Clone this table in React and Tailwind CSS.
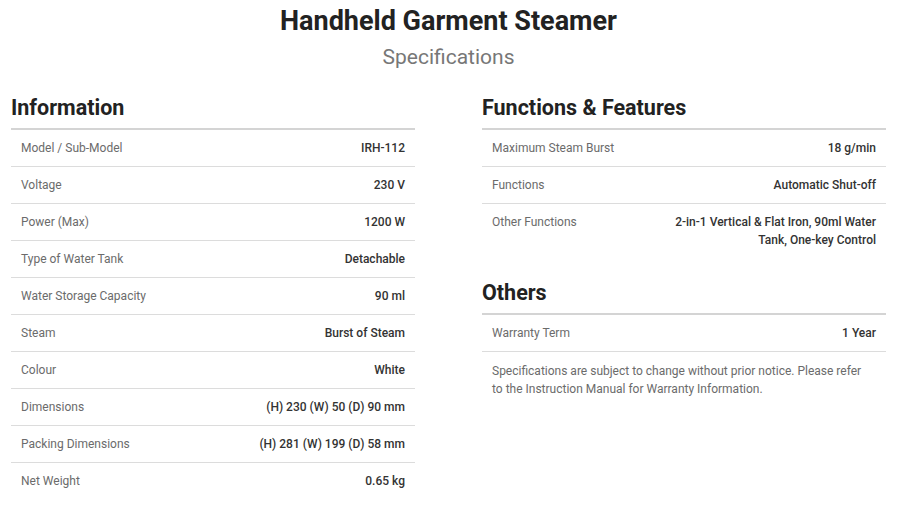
const INFORMATION = [
  ['Model / Sub-Model', 'IRH-112'],
  ['Voltage', '230 V'],
  ['Power (Max)', '1200 W'],
  ['Type of Water Tank', 'Detachable'],
  ['Water Storage Capacity', '90 ml'],
  ['Steam', 'Burst of Steam'],
  ['Colour', 'White'],
  ['Dimensions', '(H) 230 (W) 50 (D) 90 mm'],
  ['Packing Dimensions', '(H) 281 (W) 199 (D) 58 mm'],
  ['Net Weight', '0.65 kg'],
];

const FEATURES = [
  ['Maximum Steam Burst', '18 g/min'],
  ['Functions', 'Automatic Shut-off'],
  ['Other Functions', '2-in-1 Vertical & Flat Iron, 90ml Water Tank, One-key Control'],
];

const OTHERS = [['Warranty Term', '1 Year']];

function SpecTable({ title, rows, lastBorder = false }) {
  return (
    <div>
      <h2 className="text-[21.5px] font-bold leading-[28px] text-[#222] mb-[6px]">{title}</h2>
      <div className="border-t-2 border-[#d4d4d4]">
        {rows.map(([label, value], i) => (
          <div
            key={label}
            className={
              'flex items-start justify-between gap-4 px-[10px] py-[9px] text-[12px] leading-[18px] ' +
              (i < rows.length - 1 || lastBorder ? 'border-b border-[#dcdcdc]' : 'border-b border-transparent')
            }
          >
            <span className="text-[#6b6b6b]">{label}</span>
            <span className="max-w-[215px] text-right font-medium text-[#333]">{value}</span>
          </div>
        ))}
      </div>
    </div>
  );
}

export default function App() {
  return (
    <div className="bg-white pl-[11px] pr-[15px] font-['Roboto',sans-serif]">
      <h1 className="pt-[6px] text-center text-[27px] font-bold leading-[30px] text-[#222]">
        Handheld Garment Steamer
      </h1>
      <p className="mt-[8px] text-center text-[21px] leading-[26px] text-[#777]">Specifications</p>

      <div className="mt-[24px] grid grid-cols-2 gap-x-[67px]">
        <SpecTable title="Information" rows={INFORMATION} />

        <div>
          <SpecTable title="Functions & Features" rows={FEATURES} />
          <div className="mt-[20px]">
            <SpecTable title="Others" rows={OTHERS} lastBorder />
            <p className="pl-[10px] pr-[14px] pt-[10px] text-[12px] leading-[18px] text-[#6b6b6b]">
              Specifications are subject to change without prior notice. Please refer to the Instruction
              Manual for Warranty Information.
            </p>
          </div>
        </div>
      </div>
    </div>
  );
}
